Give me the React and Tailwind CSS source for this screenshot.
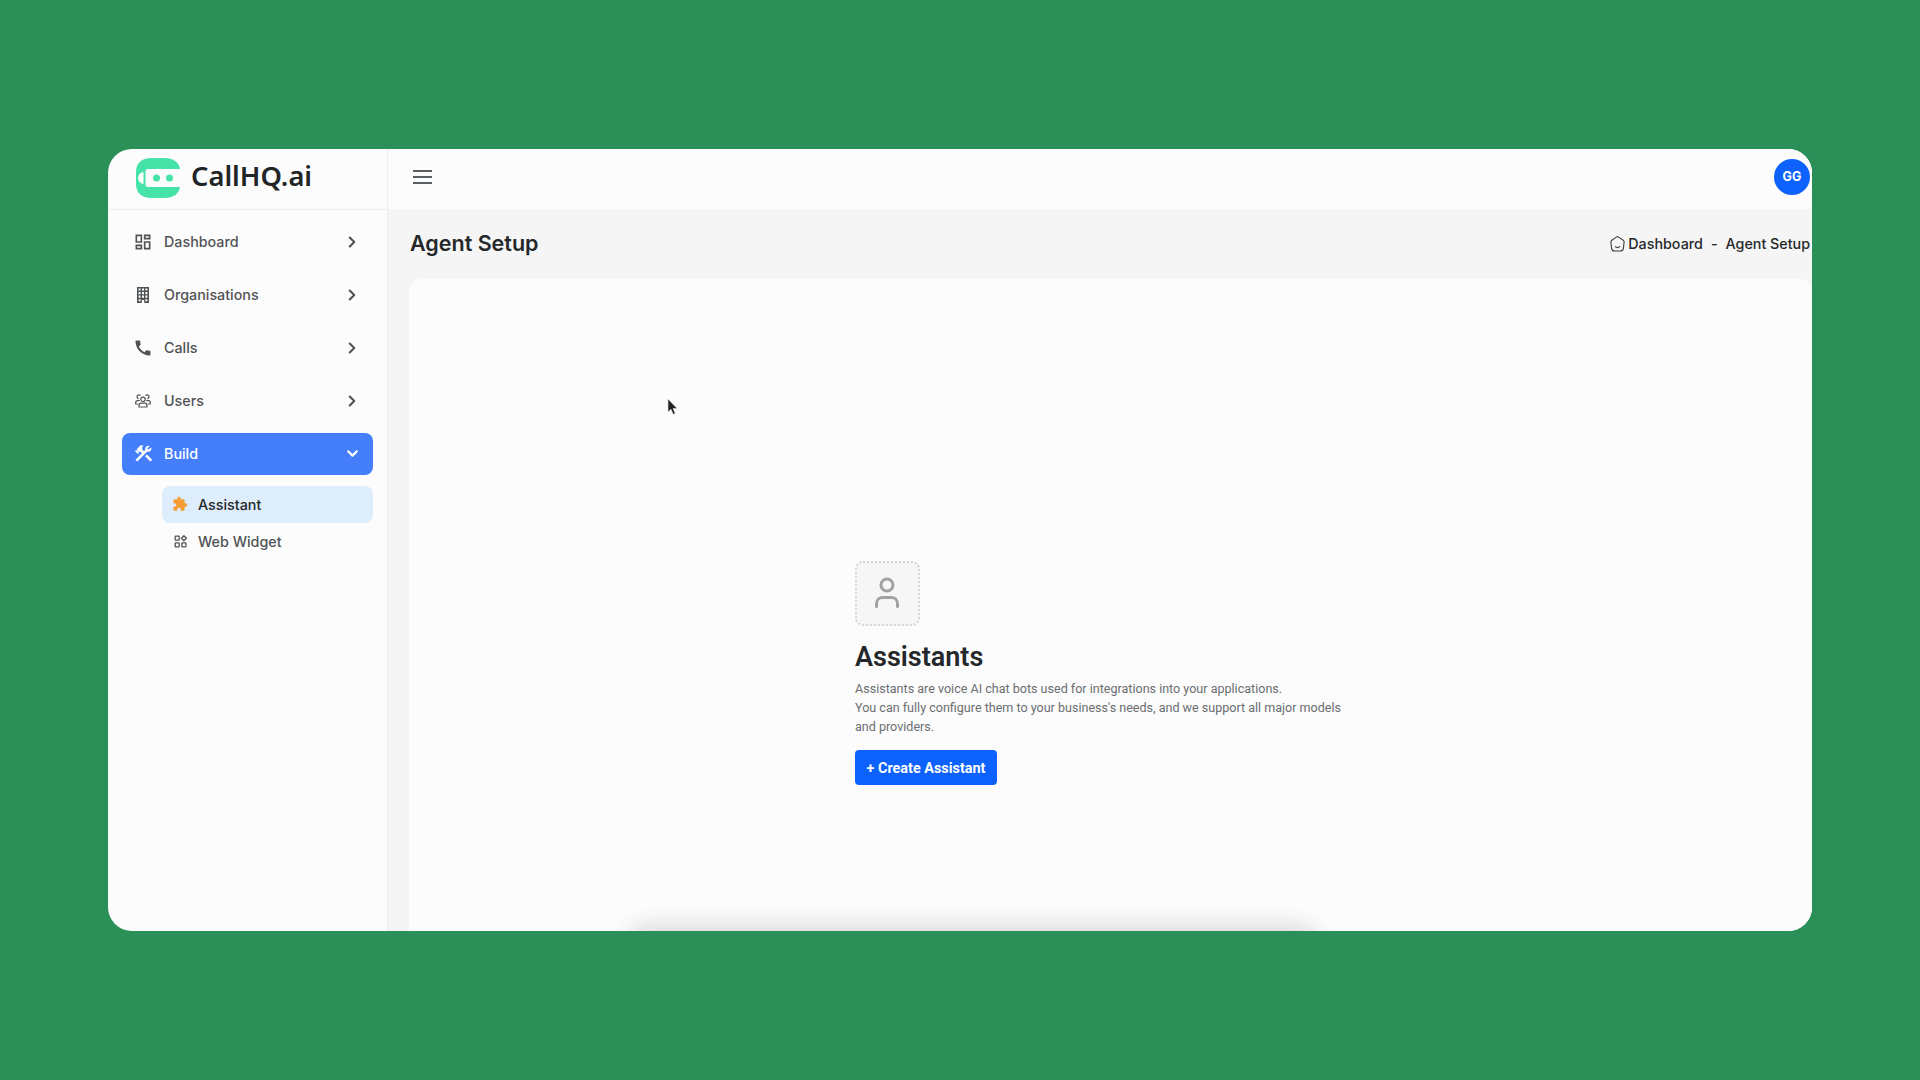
import { MdOutlineDashboard, MdCall, MdConstruction, MdExtension } from "react-icons/md";
import { ChevronRight, ChevronDown } from "lucide-react";

function Logo() {
  return (
    <svg className="mt-px h-10 w-11" viewBox="0 0 44 40">
      <path
        fill="#46e3a9"
        d="M0 14C0 5 6 0 15 0h14c8 0 14 4 15 11H12c-1.700 0-2.500 1-2.500 2.500v13C9.500 28 10.300 29 12 29h32c-1 7-7 11-15 11H15C6 40 0 35 0 26z"
      />
      <path fill="#fff" d="M7.500 14v12C5 26 2 23 2 20s3-6 5.500-6z" />
      <circle cx="20.500" cy="20" r="3.500" fill="#46e3a9" />
      <circle cx="33.500" cy="20" r="3.500" fill="#46e3a9" />
    </svg>
  );
}

function BuildingIcon() {
  return (
    <svg className="h-4 w-3" viewBox="0 0 12 16" fill="#505356">
      <path
        fillRule="evenodd"
        d="M0 0h12v16H7.200v-3H4.800v3H0zM1.600 1.500v2h2v-2zM5 1.500v2h2v-2zM8.400 1.500v2h2v-2zM1.600 5v2.200h2V5zM5 5v2.200h2V5zM8.400 5v2.200h2V5zM1.600 8.600v2.200h2V8.600zM5 8.600v2.200h2V8.600zM8.400 8.600v2.200h2V8.600zM1.600 12.200v2h2v-2zM8.400 12.200v2h2v-2z"
      />
    </svg>
  );
}

function UsersIcon() {
  return (
    <svg
      className="h-3.5 w-4"
      viewBox="0 0 16 14"
      fill="none"
      stroke="#505356"
      strokeWidth="1.200"
      strokeLinecap="round"
      strokeLinejoin="round"
    >
      <circle cx="8" cy="5.300" r="2.200" />
      <path d="M4 13v-1.500C4 10 5 9.200 6.300 9.200h3.400c1.300 0 2.300.8 2.300 2.300V13z" />
      <path d="M5 1.300C3.800.4 2 1.200 2 2.800c0 .9.500 1.500 1.200 1.800" />
      <path d="M11 1.300c1.200-.9 3-.1 3 1.500 0 .9-.5 1.500-1.200 1.800" />
      <path d="M4.200 6.700H2.500C1.300 6.700.7 7.500.7 8.500V10h2" />
      <path d="M11.800 6.700h1.700c1.200 0 1.800.8 1.800 1.800V10h-2" />
    </svg>
  );
}

function WidgetIcon() {
  return (
    <svg className="size-[13px]" viewBox="0 0 13 13" fill="none" stroke="#505356" strokeWidth="1.300">
      <rect x="1.200" y="1.200" width="4" height="4" rx=".5" />
      <rect x="1.200" y="7.900" width="4" height="4" rx=".5" />
      <rect x="7.900" y="7.900" width="4" height="4" rx=".5" />
      <path d="M9.900.8l2.500 2.500-2.500 2.500-2.500-2.500z" strokeLinejoin="round" />
    </svg>
  );
}

function HomeIcon() {
  return (
    <svg
      className="h-4 w-[15px]"
      viewBox="0 0 15 16"
      fill="none"
      stroke="#3b3e40"
      strokeWidth="1.100"
      strokeLinecap="round"
      strokeLinejoin="round"
    >
      <path d="M6.300 1.100a2 2 0 0 1 2.400 0l4.500 3.100c.7.500 1 1.100.9 1.900l-.7 6.300c-.2 1.600-1.200 2.600-2.800 2.600H4.400c-1.600 0-2.600-1-2.800-2.600L.9 6.100c-.1-.8.2-1.400.9-1.900z" />
      <path d="M5.300 10.700c1.300 1.100 3.100 1.100 4.400 0" />
    </svg>
  );
}

const items = [
  { label: "Dashboard", icon: <MdOutlineDashboard size={20} /> },
  { label: "Organisations", icon: <BuildingIcon /> },
  { label: "Calls", icon: <MdCall size={20} /> },
  { label: "Users", icon: <UsersIcon /> },
];

export default function App() {
  return (
    <div className="flex h-[1080px] w-[1920px] items-start overflow-hidden bg-[#2b9057] pt-[149px] pl-[108px] font-['Inter',sans-serif] text-[#25282b]">
      <div className="relative flex h-[781.500px] w-[1704px] overflow-hidden rounded-[24px] bg-[#fcfcfc]">
        <aside className="flex w-[280px] shrink-0 flex-col border-r border-[#ededed]">
          <div className="flex h-[61px] shrink-0 items-center gap-[11px] border-b border-[#ededed] pb-1 pl-7">
            <Logo />
            <span className="-mt-[3px] font-['Noto_Sans',sans-serif] text-[27.300px] leading-none font-semibold text-[#222527]">
              CallHQ.ai
            </span>
          </div>
          <nav className="flex flex-col px-3.5 pt-[10.500px] text-[14.300px] font-medium text-[#505356]">
            {items.map((item) => (
              <div key={item.label} className="mb-[11.100px] flex h-[42px] items-center px-3">
                <span className="-ml-px flex w-5 justify-center">{item.icon}</span>
                <span className="ml-[11px] flex-1">{item.label}</span>
                <ChevronRight size={18} strokeWidth={2.8} />
              </div>
            ))}
            <div className="flex h-[42px] items-center rounded-lg bg-[#457efb] px-3 text-white">
              <span className="-ml-px flex w-5 justify-center">
                <MdConstruction size={21} className="shrink-0" />
              </span>
              <span className="ml-[11px] flex-1">Build</span>
              <ChevronDown size={17} strokeWidth={3} />
            </div>
            <div className="mt-[11px] ml-10 flex h-[37px] items-center rounded-lg bg-[#deedfb] pl-2.5 text-[#25282b]">
              <MdExtension size={16} color="#f59e38" />
              <span className="ml-2.5">Assistant</span>
            </div>
            <div className="ml-10 flex h-[37px] items-center pl-2.5">
              <span className="flex w-4 justify-center">
                <WidgetIcon />
              </span>
              <span className="ml-2.5">Web Widget</span>
            </div>
          </nav>
        </aside>

        <main className="flex min-w-0 flex-1 flex-col bg-[#f5f5f5]">
          <header className="flex h-[60px] shrink-0 items-center justify-between bg-[#fcfcfc] pr-0.5 pb-1 pl-[25px]">
            <div className="flex w-[19px] flex-col gap-1">
              <div className="h-0.5 bg-[#5b5e61]" />
              <div className="h-0.5 bg-[#5b5e61]" />
              <div className="h-0.5 bg-[#5b5e61]" />
            </div>
            <div className="flex size-9 items-center justify-center rounded-full bg-[#0d62fe] pt-px text-[12.500px] font-bold text-white">
              GG
            </div>
          </header>
          <div className="flex h-[70px] shrink-0 items-center justify-between pr-0.5 pl-[22px]">
            <h1 className="-mt-0.5 text-[21.500px] font-semibold">Agent Setup</h1>
            <div className="flex items-center text-[14.300px] font-medium">
              <HomeIcon />
              <span className="ml-[3px]">Dashboard</span>
              <span className="mx-2">-</span>
              <span>Agent Setup</span>
            </div>
          </div>
          <section className="ml-[21px] flex-1 rounded-t-xl bg-[#fcfcfc] pt-[282px] pl-[446px] font-['Roboto',sans-serif]">
            <div className="flex size-[65px] items-center justify-center rounded-lg border-2 border-dotted border-[#d3d6d8] bg-[#f6f6f6]">
              <svg
                className="-mt-0.5 -ml-px h-[31px] w-6"
                viewBox="0 0 24 31"
                fill="none"
                stroke="#9fa2a5"
                strokeWidth="3"
                strokeLinecap="round"
              >
                <circle cx="12" cy="8" r="6" />
                <path d="M1.500 29.500v-3c0-4 3-6 6-6h9c3 0 6 2 6 6v3" />
              </svg>
            </div>
            <h2 className="mt-[15px] text-[27px] leading-8 font-semibold">Assistants</h2>
            <p className="mt-1.5 w-[500px] text-[12.560px] leading-[19px] text-[#6b6e71]">
              Assistants are voice AI chat bots used for integrations into your applications.
              <br />
              You can fully configure them to your business's needs, and we support all major models and providers.
            </p>
            <button className="mt-3.5 flex h-[35px] w-[142px] items-center justify-center rounded bg-[#0d62fe] pt-0.5 text-[14.400px] font-bold text-white">
              + Create Assistant
            </button>
          </section>
        </main>
        <div className="absolute top-[784px] left-[525px] h-10 w-[680px] rounded-full shadow-[0_0_20px_10px_rgba(0,0,0,0.12)]" />
        <svg className="absolute top-[250px] left-[559px] h-[18px] w-3 overflow-visible" viewBox="0 0 12 18">
          <path d="M1 0v13l3-2.700 2.200 5 2-.9-2.100-4.900h4z" fill="#222" stroke="#ddd" strokeWidth=".6" />
        </svg>
      </div>
    </div>
  );
}
